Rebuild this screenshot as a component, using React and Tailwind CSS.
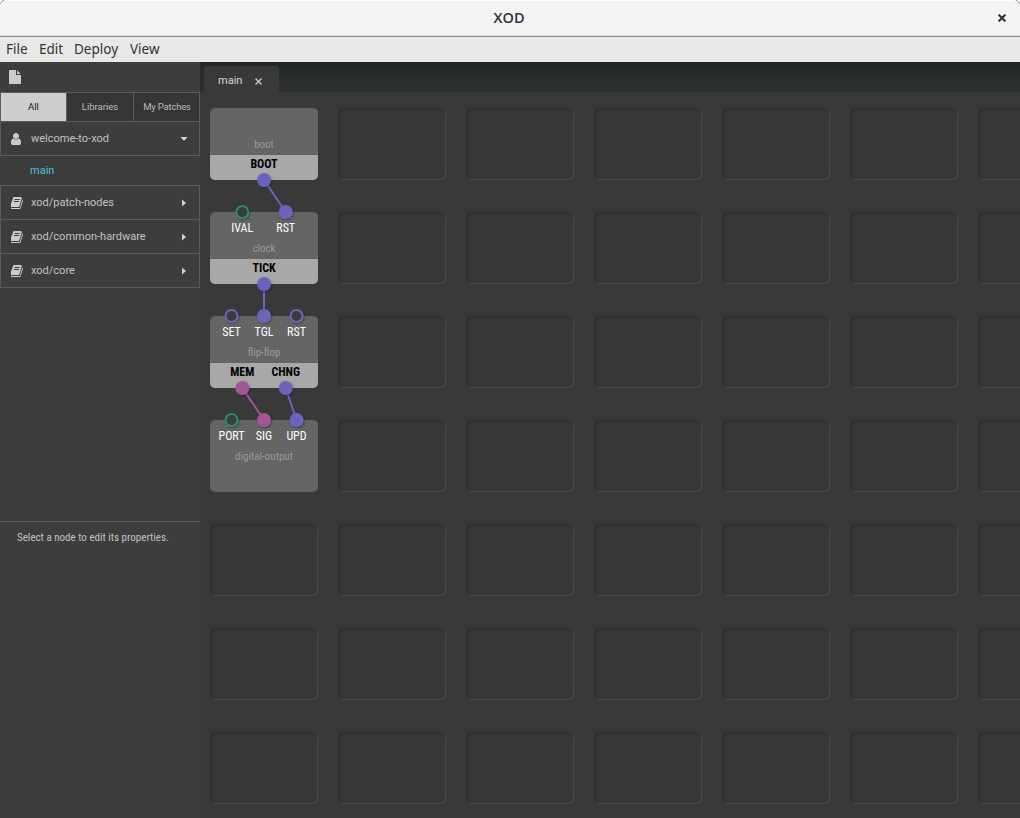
import React from "react";

const VIOLET = "#6c64bd";
const PINK = "#a45598";
const GREEN = "#2a8b6b";

const NODES = [
  { name: "boot", y: 108, inputs: [], outputs: [{ x: 264, label: "BOOT", color: VIOLET }] },
  {
    name: "clock",
    y: 212,
    inputs: [
      { x: 242.3, label: "IVAL", color: GREEN, open: true },
      { x: 285.7, label: "RST", color: VIOLET },
    ],
    outputs: [{ x: 264, label: "TICK", color: VIOLET }],
  },
  {
    name: "flip-flop",
    y: 316,
    inputs: [
      { x: 231.5, label: "SET", color: VIOLET, open: true },
      { x: 264, label: "TGL", color: VIOLET },
      { x: 296.5, label: "RST", color: VIOLET, open: true },
    ],
    outputs: [
      { x: 242.3, label: "MEM", color: PINK },
      { x: 285.7, label: "CHNG", color: VIOLET },
    ],
  },
  {
    name: "digital-output",
    y: 420,
    inputs: [
      { x: 231.5, label: "PORT", color: GREEN, open: true },
      { x: 264, label: "SIG", color: PINK },
      { x: 296.5, label: "UPD", color: VIOLET },
    ],
    outputs: [],
  },
];

const LINKS = [
  { x1: 264, y1: 180, x2: 285.7, y2: 212, color: VIOLET },
  { x1: 264, y1: 284, x2: 264, y2: 316, color: VIOLET },
  { x1: 242.3, y1: 388, x2: 264, y2: 420, color: PINK },
  { x1: 285.7, y1: 388, x2: 296.5, y2: 420, color: VIOLET },
];

const BOOK = {
  box: "128 0 1536 1792",
  d: "M1639 478q40 57 18 129l-275 906q-19 64-76.5 107.5t-122.5 43.5h-923q-77 0-148.5-53.5t-99.5-131.5q-24-67-2-127 0-4 3-27t4-37q1-8-3-21.5t-3-19.5q2-11 8-21t16.5-23.5 16.5-23.5q23-38 45-91.5t30-91.5q3-10 .5-30t-.5-28q3-11 17-28t17-23q21-36 42-92t25-90q1-9-2.5-32t.5-28q4-13 22-30.5t22-22.5q19-26 42.5-84.5t27.5-96.5q1-8-3-25.5t-2-26.5q2-8 9-18t18-23 17-21q8-12 16.5-30.5t15-35 16-36 19.5-32 26.5-23.5 36-11.5 47.5 5.5l-1 3q38-9 51-9h761q74 0 114 56t18 130l-274 906q-36 119-71.5 153.5t-128.5 34.5h-869q-27 0-38 15-11 16-1 43 24 70 144 70h923q29 0 56-15.5t35-41.5l300-987q7-22 5-57 38 15 59 43zm-1064 2q-4 13 2 22.5t20 9.5h608q13 0 25.5-9.5t16.5-22.5l21-64q4-13-2-22.5t-20-9.5h-608q-13 0-25.5 9.5t-16.5 22.5zm-83 256q-4 13 2 22.5t20 9.5h608q13 0 25.5-9.5t16.5-22.5l21-64q4-13-2-22.5t-20-9.5h-608q-13 0-25.5 9.5t-16.5 22.5z",
};
const USER = {
  box: "256 0 1280 1792",
  d: "M1536 1399q0 109-62.5 187t-150.5 78h-854q-88 0-150.5-78t-62.5-187q0-85 8.5-160.5t31.5-152 58.5-131 94-89 134.5-34.5q131 128 313 128t313-128q76 0 134.5 34.5t94 89 58.5 131 31.5 152 8.5 160.5zm-256-887q0 159-112.5 271.5t-271.5 112.5-271.5-112.5-112.5-271.5 112.5-271.5 271.5-112.5 271.5 112.5 112.5 271.5z",
};
const FILE = {
  box: "128 0 1536 1792",
  d: "M1152 512v-472q22 14 36 28l408 408q14 14 28 36h-472zm-128 32q0 40 28 68t68 28h544v1056q0 40-28 68t-68 28h-1344q-40 0-68-28t-28-68v-1600q0-40 28-68t68-28h800v544z",
};

function Glyph({ icon, className }) {
  return (
    <svg viewBox={icon.box} className={className} fill="currentColor">
      <path d={icon.d} />
    </svg>
  );
}

function TitleBar() {
  return (
    <header className="relative flex h-[37px] shrink-0 items-center justify-center border-t border-b border-t-white border-b-[#8b8d87] bg-[#f3f3f3] shadow-[inset_0_-1px_0_#dcdcda]">
      <h1 className="pr-[2px] pb-[2px] font-['Open_Sans',sans-serif] text-[14.5px] leading-5 font-semibold text-[#2e3436]">XOD</h1>
      <svg viewBox="0 0 8 8" className="absolute top-[13px] right-[14px] h-2 w-2" stroke="#2e3436" strokeWidth="2.1">
        <path d="M.6.6 7.4 7.4M7.4.6.6 7.4" />
      </svg>
      <svg viewBox="0 0 5 5" className="absolute -top-px left-0 h-[5px] w-[5px]">
        <path d="M0 0H5Q1 1 0 5Z" fill="#fff" />
        <path d="M0 4.5Q1 1 4.5 0" fill="none" stroke="#999" />
      </svg>
      <svg viewBox="0 0 5 5" className="absolute -top-px right-0 h-[5px] w-[5px]">
        <path d="M5 0H0Q4 1 5 5Z" fill="#fff" />
        <path d="M5 4.5Q4 1 .5 0" fill="none" stroke="#999" />
      </svg>
    </header>
  );
}

function MenuBar() {
  return (
    <nav className="flex h-[25px] shrink-0 items-center bg-[#e8e8e6] pb-[2px] pl-[6px] font-['Noto_Sans',sans-serif] text-[13.5px] leading-5 text-[#2e3436]">
      <span className="w-[33px]">File</span>
      <span className="w-[35px]">Edit</span>
      <span className="w-[56px]">Deploy</span>
      <span>View</span>
    </nav>
  );
}

function LibraryRow({ icon, label, open }) {
  return (
    <div className="flex h-[34px] items-center border-x border-b border-[#5b5b5b] pl-[10px] text-[11px] text-[#c3c2be]">
      <span className="w-5">
        <Glyph icon={icon} className={open ? "h-[14px] w-[10px] text-[#cccbc6]" : "h-[14px] w-[12px] text-[#cccbc6]"} />
      </span>
      <span className="flex-1 pt-[2px]">{label}</span>
      {open ? (
        <svg viewBox="0 0 8 4" className="mt-[1px] mr-[11px] h-1 w-2" fill="#d2d1cc">
          <path d="M.5 0h7L4 4Z" />
        </svg>
      ) : (
        <svg viewBox="0 0 4 8" className="mt-px mr-[13px] h-2 w-1" fill="#d2d1cc">
          <path d="M0 .5v7L4 4Z" />
        </svg>
      )}
    </div>
  );
}

function Sidebar() {
  return (
    <aside className="flex w-[200px] shrink-0 flex-col bg-[#3d3d3d]">
      <div className="flex h-[30px] items-center pl-[9px]">
        <Glyph icon={FILE} className="h-[14px] w-[12px] text-[#cccbc6]" />
      </div>
      <div className="grid h-[30px] grid-cols-[66px_67px_67px] border border-[#5b5b5b] text-center text-[9.5px] leading-7 text-[#bdbcb8]">
        <div className="mr-px bg-[#cdcdcd] text-[#171717]">All</div>
        <div className="-ml-px border-x border-[#5b5b5b] bg-[#353535]">Libraries</div>
        <div className="mr-[2px] bg-[#353535] pl-px tracking-[-0.02em]">My Patches</div>
      </div>
      <LibraryRow icon={USER} label="welcome-to-xod" open />
      <div className="flex h-[30px] items-center border-b border-[#5b5b5b] pt-[2px] pl-[30px] text-[11px] text-[#4dc0d8]">main</div>
      <LibraryRow icon={BOOK} label="xod/patch-nodes" />
      <LibraryRow icon={BOOK} label="xod/common-hardware" />
      <LibraryRow icon={BOOK} label="xod/core" />
      <div className="flex-1" />
      <div className="h-[297px] border-t border-[#5b5b5b] pt-[8px] pl-[17px] font-['Roboto_Condensed','Roboto',sans-serif] text-[11px] leading-4 text-[#c3c2be] [font-stretch:75%]">
        Select a node to edit its properties.
      </div>
    </aside>
  );
}

function Pin({ x, y, color, open }) {
  return open ? (
    <circle cx={x} cy={y} r="6" fill="#3b3b3b" stroke={color} strokeWidth="2" filter="url(#drop)" />
  ) : (
    <circle cx={x} cy={y} r="7" fill={color} filter="url(#drop)" />
  );
}

function Patch() {
  return (
    <svg
      viewBox="200 92 820 726"
      className="absolute inset-0 h-[726px] w-[820px] font-['Roboto_Condensed','Roboto',sans-serif] text-[12px] [font-stretch:75%]"
      textAnchor="middle"
    >
      <defs>
        <filter id="drop" x="-40%" y="-40%" width="180%" height="180%">
          <feDropShadow dx="1" dy="1" stdDeviation="1" floodColor="#000" floodOpacity="0.35" />
        </filter>
      </defs>
      {NODES.map((n) => (
        <g key={n.name}>
          <rect x="210" y={n.y} width="108" height="72" rx="5" fill="#656565" />
          {n.outputs.length > 0 && (
            <path d={`M210 ${n.y + 47}h108v20a5 5 0 0 1-5 5h-98a5 5 0 0 1-5-5Z`} fill="#a8a8a8" />
          )}
          <text x="264" y={n.y + 40} fill="#9b9b9b" className="text-[11px]">{n.name}</text>
          {n.inputs.map((p) => (
            <text key={p.label} x={p.x} y={n.y + 20} fill="#fff">{p.label}</text>
          ))}
          {n.outputs.map((p) => (
            <text key={p.label} x={p.x} y={n.y + 60} fill="#000" className="font-bold">{p.label}</text>
          ))}
        </g>
      ))}
      {LINKS.map((l, i) => (
        <line key={i} x1={l.x1} y1={l.y1} x2={l.x2} y2={l.y2} stroke={l.color} strokeWidth="2" />
      ))}
      {NODES.map((n) => (
        <g key={n.name}>
          {n.inputs.map((p) => <Pin key={p.label} {...p} y={n.y} />)}
          {n.outputs.map((p) => <Pin key={p.label} {...p} y={n.y + 72} />)}
        </g>
      ))}
    </svg>
  );
}

function Workspace() {
  return (
    <main className="flex min-w-0 flex-1 flex-col bg-[#393939]">
      <div className="flex h-[30px] shrink-0 items-end bg-[linear-gradient(#222524,#2b2f30_60%,#2b2f30)] pl-1">
        <div className="flex h-[26px] w-[75px] items-center rounded-t-[4px] bg-[#393939] pt-[2px] pl-[14px] text-[11px] text-[#d8d8d6]">
          <span className="flex-1 pt-[2px]">main</span>
          <svg viewBox="0 0 7 7" className="mt-[2px] mr-[17px] h-[7px] w-[7px]" stroke="#c8c8c6" strokeWidth="1.4">
            <path d="M.5.5l6 6M6.5.5l-6 6" />
          </svg>
        </div>
      </div>
      <div className="relative flex-1 overflow-hidden">
        <div className="grid w-[900px] grid-cols-[repeat(7,108px)] gap-x-5 gap-y-8 pt-4 pl-[10px]">
          {Array.from({ length: 49 }, (_, i) => (
            <div key={i} className="h-[72px] rounded-[5px] bg-[#373737] shadow-[inset_-1px_-1px_0_#4b4b4b,inset_1px_1px_3px_#2d2d2d]" />
          ))}
        </div>
        <Patch />
      </div>
    </main>
  );
}

export default function App() {
  return (
    <div className="flex h-[818px] w-[1020px] flex-col overflow-hidden font-['Roboto',sans-serif]">
      <TitleBar />
      <MenuBar />
      <div className="flex min-h-0 flex-1">
        <Sidebar />
        <Workspace />
      </div>
    </div>
  );
}
